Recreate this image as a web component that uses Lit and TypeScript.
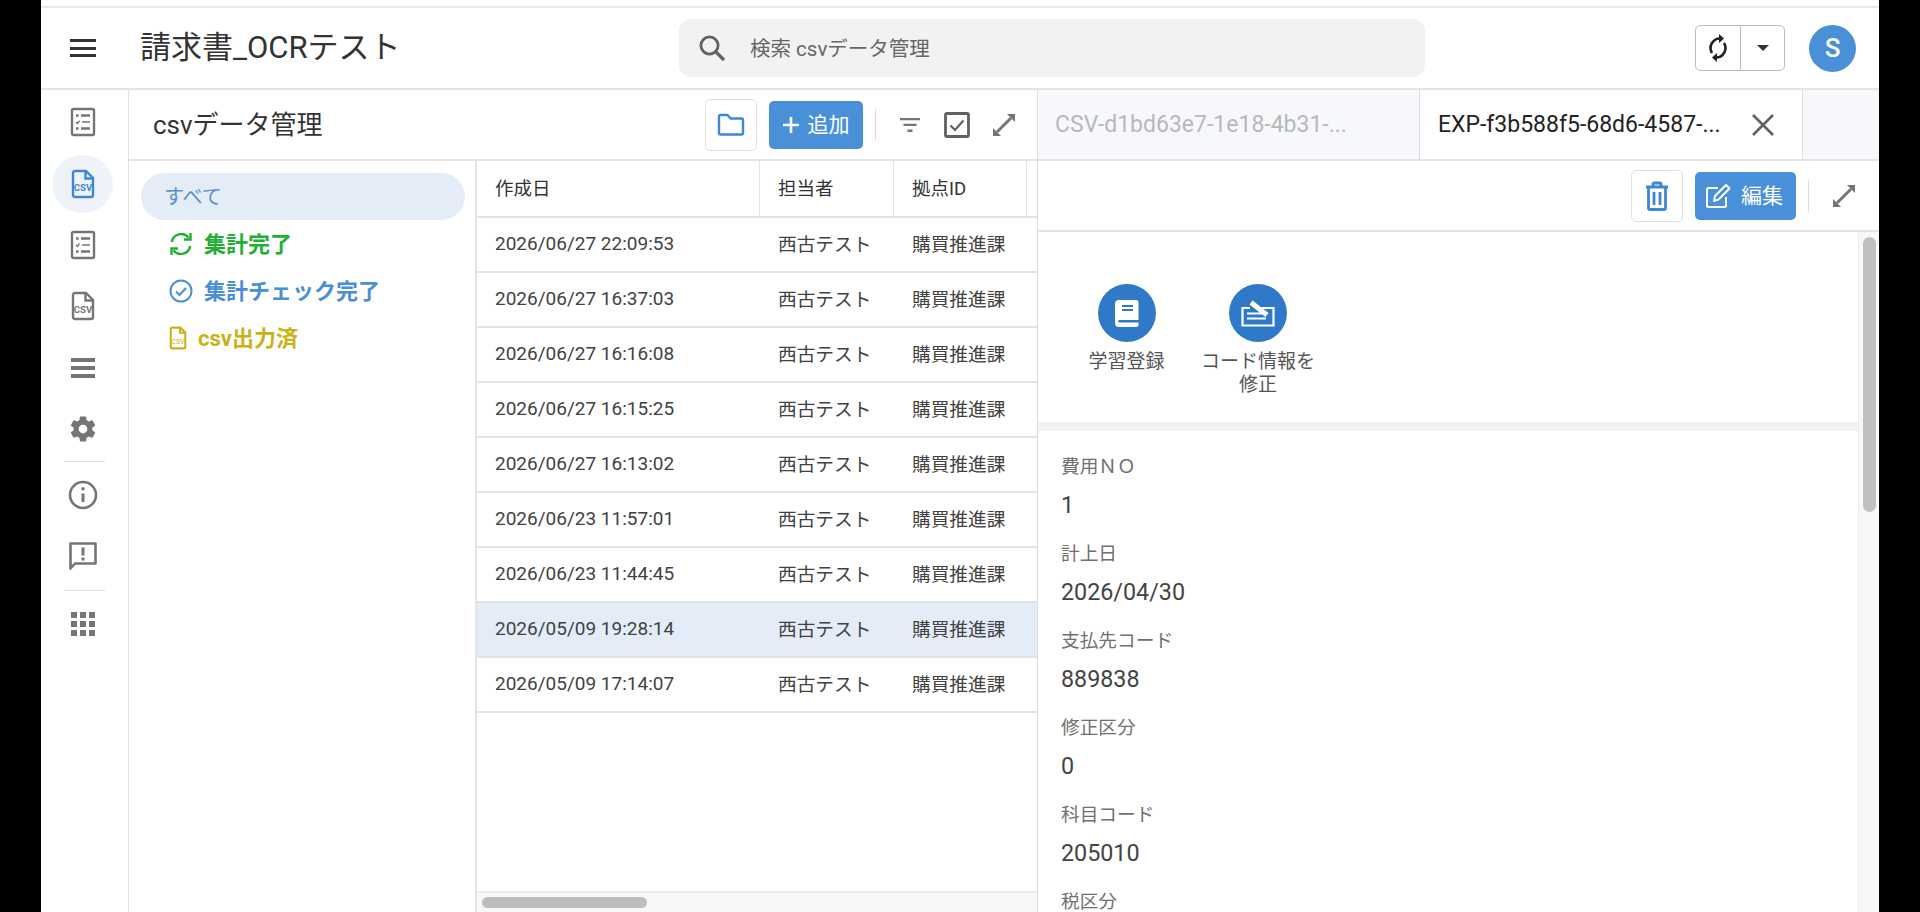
import { LitElement, html, css, svg } from 'lit';
import { customElement } from 'lit/decorators.js';

const rows = [
  ['2026/06/27 22:09:53', false],
  ['2026/06/27 16:37:03', false],
  ['2026/06/27 16:16:08', false],
  ['2026/06/27 16:15:25', false],
  ['2026/06/27 16:13:02', false],
  ['2026/06/23 11:57:01', false],
  ['2026/06/23 11:44:45', false],
  ['2026/05/09 19:28:14', true],
  ['2026/05/09 17:14:07', false],
] as const;

const fields = [
  ['費用ＮＯ', '1'],
  ['計上日', '2026/04/30'],
  ['支払先コード', '889838'],
  ['修正区分', '0'],
  ['科目コード', '205010'],
  ['税区分', ''],
];

const checklist = html`<svg class="i" width="26" height="30" viewBox="0 0 26 30" fill="none" stroke="#757575">
  <rect x="2" y="2" width="22" height="26" rx="1.5" stroke-width="2.4" />
  <path d="M6 8.500h2.600M6 21.500h2.600M11 8.500h9M11 21.500h9" stroke-width="2.600" />
  <path d="M6 15l1.400 1.400 2.200-2.800M12 15h8" stroke-width="1.500" />
</svg>`;

const csvFile = (c: string) => html`<svg class="i" width="26" height="30" viewBox="0 0 26 30" fill="none" stroke=${c}>
  <path d="M3 4a2 2 0 0 1 2-2h11l7 7v17a2 2 0 0 1-2 2H5a2 2 0 0 1-2-2z" stroke-width="2.400" />
  <path d="M15.500 2.500V9.500H23" stroke-width="2.400" />
  <text x="13" y="22" text-anchor="middle" font-size="9.500" font-weight="700" font-family="Roboto, sans-serif" fill=${c} stroke="none">CSV</text>
</svg>`;

const expand = (c: string) => svg`<svg width="24" height="24" viewBox="0 0 24 24" fill=${c}>
  <path d="M15 1h8v8zM1 15v8h8z" />
  <path d="M5 19L19 5" stroke=${c} stroke-width="3" />
</svg>`;

@customElement('app-root')
export class AppRoot extends LitElement {
  static styles = css`
    :host {
      display: block;
      height: 912px;
      overflow: hidden;
      background: #000;
      padding: 0 41px;
      font-family: Roboto, 'Noto Sans CJK JP', sans-serif;
      color: #333;
    }
    svg {
      display: block;
      flex: none;
    }
    .page {
      height: 912px;
      background: #fff;
      display: flex;
      flex-direction: column;
      padding-top: 6px;
      box-sizing: border-box;
    }
    .top {
      height: 84px;
      flex: none;
      border-top: 2px solid #e8e8e8;
      border-bottom: 2px solid #e4e4e4;
      box-sizing: border-box;
      display: flex;
      align-items: center;
    }
    .burger {
      margin-left: 29px;
      width: 26px;
      height: 18px;
      flex: none;
      border-top: 3px solid #333;
      border-bottom: 3px solid #333;
      box-sizing: border-box;
      position: relative;
    }
    .burger::after {
      content: '';
      position: absolute;
      left: 0;
      right: 0;
      top: 4.500px;
      height: 3px;
      background: #333;
    }
    .app-title {
      margin-left: 44px;
      width: 539px;
      font-size: 31px;
      line-height: 40px;
      color: #333;
      flex: none;
    }
    .search {
      width: 746px;
      height: 58px;
      flex: none;
      background: #f2f2f2;
      border-radius: 12px;
      display: flex;
      align-items: center;
      padding-left: 20px;
      box-sizing: border-box;
      font-size: 20.500px;
      color: #666;
      gap: 25px;
    }
    .search span {
      padding-bottom: 3px;
    }
    .sync {
      margin-left: 270px;
      width: 90px;
      height: 46px;
      flex: none;
      border: 1px solid #bdbdbd;
      border-radius: 5px;
      display: flex;
      box-sizing: border-box;
    }
    .sync > div {
      display: flex;
      align-items: center;
      justify-content: center;
    }
    .sync > div:first-child {
      width: 44px;
      border-right: 1px solid #bdbdbd;
    }
    .sync > div:last-child {
      flex: 1;
    }
    .caret {
      width: 0;
      height: 0;
      border-left: 6px solid transparent;
      border-right: 6px solid transparent;
      border-top: 6px solid #333;
    }
    .avatar {
      margin-left: 24px;
      width: 47px;
      height: 47px;
      border-radius: 50%;
      flex: none;
      background: #4a90d9;
      color: #fff;
      font-size: 26px;
      font-weight: 500;
      display: flex;
      align-items: center;
      justify-content: center;
    }
    .body {
      flex: 1;
      min-height: 0;
      display: flex;
    }
    .rail {
      width: 88px;
      flex: none;
      border-right: 1px solid #e0e0e0;
      box-sizing: border-box;
      display: flex;
      flex-direction: column;
      align-items: center;
      padding: 1px 4px 0 0;
    }
    .rail-item {
      width: 61px;
      height: 61.500px;
      flex: none;
      display: flex;
      align-items: center;
      justify-content: center;
      border-radius: 50%;
    }
    .rail-item.on {
      height: 58px;
      margin: 2px 0 1.500px;
      background: #eef3fa;
    }
    .rail-sep {
      width: 41px;
      height: 1px;
      flex: none;
      background: #dcdcdc;
      margin-left: 4px;
    }
    .rail-item.sm {
      margin-top: 2px;
    }
    .left {
      width: 909px;
      flex: none;
      display: flex;
      flex-direction: column;
      border-right: 1px solid #dedede;
      box-sizing: border-box;
    }
    .bar {
      height: 71px;
      flex: none;
      border-bottom: 2px solid #e4e4e4;
      box-sizing: border-box;
      display: flex;
      align-items: center;
    }
    .bar h2 {
      margin: 0 0 0 24px;
      font-size: 26px;
      line-height: 34px;
      font-weight: 400;
      color: #333;
      flex: 1;
    }
    .outline-btn {
      width: 52px;
      height: 52px;
      flex: none;
      border: 1px solid #e0e0e0;
      border-radius: 5px;
      box-sizing: border-box;
      display: flex;
      align-items: center;
      justify-content: center;
    }
    .solid-btn {
      height: 48px;
      flex: none;
      background: #4a90d9;
      color: #fff;
      border-radius: 5px;
      display: flex;
      align-items: center;
      justify-content: center;
      box-sizing: border-box;
      font-size: 21px;
    }
    .solid-btn span {
      padding-bottom: 4px;
    }
    .add {
      margin-left: 12px;
      width: 94px;
      gap: 9px;
    }
    .vsep {
      width: 1px;
      flex: none;
      background: #dcdcdc;
    }
    .tool {
      display: flex;
      align-items: center;
      justify-content: center;
      flex: none;
    }
    .split {
      flex: 1;
      min-height: 0;
      display: flex;
    }
    .filters {
      width: 348px;
      flex: none;
      border-right: 2px solid #e4e4e4;
      box-sizing: border-box;
      padding: 12px 10px 0 12px;
    }
    .filter {
      height: 47px;
      display: flex;
      align-items: center;
      font-size: 22px;
      font-weight: 700;
      padding-left: 28px;
    }
    .filter span {
      padding-bottom: 3px;
    }
    .filter.all {
      background: #e4ecf7;
      border-radius: 24px;
      color: #5a8fd0;
      font-weight: 400;
      font-size: 20px;
      padding-left: 23px;
    }
    .filter.green {
      color: #22b033;
      gap: 11px;
    }
    .filter.blue {
      color: #4a8fd6;
      gap: 11px;
    }
    .filter.yellow {
      color: #c9b21a;
      gap: 11px;
    }
    .table {
      flex: 1;
      min-width: 0;
      display: flex;
      flex-direction: column;
      font-size: 19px;
      color: #424242;
    }
    .row {
      height: 55px;
      flex: none;
      box-sizing: border-box;
      border-bottom: 2px solid #e4e4e4;
      display: grid;
      grid-template-columns: 283px 134px 133px 1fr;
      align-items: center;
    }
    .row.head {
      height: 57px;
      align-items: stretch;
    }
    .row.head > div {
      border-right: 1px solid #e4e4e4;
      display: flex;
      align-items: center;
      color: #333;
      font-size: 18.500px;
      padding-bottom: 3px;
    }
    .row.head > div:last-child {
      border-right: 0;
    }
    .row > div {
      padding-left: 18px;
      padding-bottom: 2px;
      white-space: nowrap;
    }
    .row .cjk {
      font-size: 18.700px;
      padding-bottom: 4px;
    }
    .row.sel {
      background: #e4ecf7;
    }
    .tspace {
      flex: 1;
    }
    .hscroll {
      height: 21px;
      flex: none;
      background: #f8f8f8;
      border-top: 2px solid #ececec;
      box-sizing: border-box;
      padding: 4px 5px;
    }
    .hscroll div {
      width: 165px;
      height: 11px;
      border-radius: 6px;
      background: #bdbdbd;
    }
    .right {
      flex: 1;
      min-width: 0;
      display: flex;
      flex-direction: column;
    }
    .tabs {
      height: 71px;
      flex: none;
      display: flex;
      background: #f7f8fb;
      border-bottom: 2px solid #e4e4e4;
      box-sizing: border-box;
    }
    .tab {
      width: 382px;
      flex: none;
      box-sizing: border-box;
      display: flex;
      align-items: center;
      padding-left: 17px;
      font-size: 23px;
      color: #b8b8b8;
      white-space: nowrap;
      border-right: 1px solid #dedede;
    }
    .tab.on {
      width: 383px;
      padding-left: 18px;
      background: #fff;
      color: #222;
      gap: 31px;
    }
    .actions {
      height: 71px;
      flex: none;
      border-bottom: 2px solid #e4e4e4;
      box-sizing: border-box;
      display: flex;
      align-items: center;
      justify-content: flex-end;
    }
    .edit {
      margin-left: 12px;
      width: 101px;
      gap: 10px;
      padding-right: 3px;
    }
    .detail {
      flex: 1;
      min-height: 0;
      display: flex;
    }
    .detail-main {
      flex: 1;
      min-width: 0;
      overflow: hidden;
    }
    .quick {
      height: 199px;
      box-sizing: border-box;
      border-bottom: 9px solid #f2f2f2;
      padding: 52px 0 0 32px;
      display: flex;
      align-items: flex-start;
      gap: 12px;
    }
    .quick-item {
      width: 113px;
      display: flex;
      flex-direction: column;
      align-items: center;
      font-size: 19px;
      line-height: 22.500px;
      color: #555;
      text-align: center;
    }
    .quick-item span {
      margin-top: 9px;
    }
    .circle {
      width: 58px;
      height: 58px;
      border-radius: 50%;
      background: #2f79c8;
      display: flex;
      align-items: center;
      justify-content: center;
    }
    .fields {
      padding: 23px 0 0 23px;
    }
    .field {
      height: 87px;
    }
    .field .k {
      font-size: 18.700px;
      line-height: 26px;
      color: #707070;
    }
    .field .v {
      font-size: 23.300px;
      line-height: 30px;
      margin-top: 10px;
      color: #444;
    }
    .vscroll {
      width: 21px;
      flex: none;
      background: #f8f8f8;
      border-left: 1px solid #ececec;
      box-sizing: border-box;
      padding: 5px 3px 0 4px;
    }
    .vscroll div {
      height: 275px;
      border-radius: 7px;
      background: #c0c0c0;
    }
  `;

  render() {
    return html`<div class="page">
      <div class="top">
        <div class="burger"></div>
        <div class="app-title">請求書_OCRテスト</div>
        <div class="search">
          <svg width="26" height="26" viewBox="0 0 26 26" fill="none" stroke="#616161" stroke-width="2.800">
            <circle cx="10.500" cy="10.500" r="8.600" />
            <path d="M16.500 16.500L25 25" stroke-width="3.200" />
          </svg>
          <span>検索 csvデータ管理</span>
        </div>
        <div class="sync">
          <div>
            <svg width="22" height="30" viewBox="0 0 22 30" fill="#212121">
              <path d="M12 1v9l5-4.500z M10 29v-9l-5 4.500z" />
              <path d="M13 5.500A9.500 9.500 0 0 0 5 20M9 24.500A9.500 9.500 0 0 0 17 10" fill="none" stroke="#212121" stroke-width="2.600" />
            </svg>
          </div>
          <div><span class="caret"></span></div>
        </div>
        <div class="avatar">S</div>
      </div>
      <div class="body">
        <div class="rail">
          <div class="rail-item">${checklist}</div>
          <div class="rail-item on">${csvFile('#3f87d4')}</div>
          <div class="rail-item">${checklist}</div>
          <div class="rail-item">${csvFile('#757575')}</div>
          <div class="rail-item">
            <svg width="26" height="22" viewBox="0 0 26 22" fill="#757575"><path d="M1 1h24v4H1zM1 9h24v4H1zM1 17h24v4H1z" /></svg>
          </div>
          <div class="rail-item">
            <svg width="30" height="30" viewBox="0 0 24 24" fill="#757575"><path d="M19.430 12.980a7.800 7.800 0 0 0 .07-.98c0-.33-.03-.66-.07-.98l2.110-1.650a.5.5 0 0 0 .12-.64l-2-3.460a.5.5 0 0 0-.61-.22l-2.490 1a7.300 7.300 0 0 0-1.690-.98l-.38-2.650A.49.49 0 0 0 14 2h-4a.49.49 0 0 0-.49.42l-.38 2.650c-.61.25-1.170.59-1.690.98l-2.490-1a.49.49 0 0 0-.61.22l-2 3.460a.49.49 0 0 0 .12.640l2.110 1.650a7.900 7.900 0 0 0 0 1.960l-2.110 1.650a.5.5 0 0 0-.12.64l2 3.460c.12.22.39.3.61.22l2.490-1c.52.4 1.080.73 1.690.98l.38 2.650c.03.24.24.42.49.42h4c.25 0 .46-.18.49-.42l.38-2.650c.61-.25 1.170-.59 1.690-.98l2.490 1c.23.09.49 0 .61-.22l2-3.460a.5.5 0 0 0-.12-.64zM12 15.500a3.500 3.500 0 1 1 0-7 3.500 3.500 0 0 1 0 7z" /></svg>
          </div>
          <div class="rail-sep" style="margin-top:1px"></div>
          <div class="rail-item sm">
            <svg width="30" height="30" viewBox="0 0 30 30" fill="none" stroke="#757575" stroke-width="2.600"><circle cx="15" cy="15" r="13" /><path d="M15 13.500V22" stroke-width="3" /><circle cx="15" cy="8.800" r="1.700" fill="#757575" stroke="none" /></svg>
          </div>
          <div class="rail-item">
            <svg width="30" height="30" viewBox="0 0 30 30" fill="none" stroke="#757575" stroke-width="2.600"><path d="M2.500 2.500h25v20H7L2.500 27.500z" stroke-linejoin="round" /><path d="M15 6.500v8M15 16.500v3" stroke-width="3" /></svg>
          </div>
          <div class="rail-sep" style="margin-top:3px"></div>
          <div class="rail-item sm">
            <svg width="26" height="26" viewBox="0 0 26 26" fill="#757575"><path d="M1 1h6v6H1zM10 1h6v6h-6zM19 1h6v6h-6zM1 10h6v6H1zM10 10h6v6h-6zM19 10h6v6h-6zM1 19h6v6H1zM10 19h6v6h-6zM19 19h6v6h-6z" /></svg>
          </div>
        </div>
        <div class="left">
          <div class="bar">
            <h2>csvデータ管理</h2>
            <div class="outline-btn">
              <svg width="28" height="24" viewBox="0 0 28 24" fill="none" stroke="#3f87d4" stroke-width="2.400"><path d="M2 3.500a1.500 1.500 0 0 1 1.500-1.500h7l3 3.500h11a1.500 1.500 0 0 1 1.500 1.500v13a1.500 1.500 0 0 1-1.500 1.500h-21A1.500 1.500 0 0 1 2 20.500z" stroke-linejoin="round" /></svg>
            </div>
            <div class="solid-btn add">
              <svg width="16" height="16" viewBox="0 0 16 16" fill="none" stroke="#fff" stroke-width="2.600"><path d="M8 0v16M0 8h16" /></svg>
              <span>追加</span>
            </div>
            <div class="vsep" style="height:31px;margin:0 0 0 12px"></div>
            <div class="tool" style="width:68px">
              <svg width="20" height="14" viewBox="0 0 20 14" fill="#757575"><path d="M0 0h20v2.200H0zM3.500 5.800h13V8h-13zM7.500 11.500h5V14h-5z" /></svg>
            </div>
            <div class="tool" style="width:26px">
              <svg width="26" height="26" viewBox="0 0 26 26" fill="none" stroke="#616161"><rect x="1.500" y="1.500" width="23" height="23" rx="1.500" stroke-width="2.800" /><path d="M6.500 13.500l4.500 4.500 8.500-9.500" stroke-width="2.200" /></svg>
            </div>
            <div class="tool" style="width:67px">${expand('#757575')}</div>
          </div>
          <div class="split">
            <div class="filters">
              <div class="filter all"><span>すべて</span></div>
              <div class="filter green">
                <svg width="24" height="24" viewBox="0 0 24 24" fill="none" stroke="#22b033" stroke-width="2.400"><path d="M2.800 10A9.500 9.500 0 0 1 19.500 5.500M21.200 14A9.500 9.500 0 0 1 4.500 18.500" /><path d="M21.500 1v6.500H15M2.500 23v-6.500H9" /></svg>
                <span>集計完了</span>
              </div>
              <div class="filter blue">
                <svg width="24" height="24" viewBox="0 0 24 24" fill="none" stroke="#4a8fd6" stroke-width="2"><circle cx="12" cy="12" r="10.500" /><path d="M7 12.500l3.500 3.500 6.500-7" /></svg>
                <span>集計チェック完了</span>
              </div>
              <div class="filter yellow">
                <svg width="18" height="24" viewBox="0 0 26 34" fill="none" stroke="#c9b21a"><path d="M2.500 4a2 2 0 0 1 2-2h12l7 7v21a2 2 0 0 1-2 2h-17a2 2 0 0 1-2-2z" stroke-width="3" /><path d="M16 2.500V9.500H23" stroke-width="3" /><text x="13" y="25" text-anchor="middle" font-size="10" font-weight="400" font-family="Roboto, sans-serif" fill="#c9b21a" stroke="none">CSV</text></svg>
                <span>csv出力済</span>
              </div>
            </div>
            <div class="table">
              <div class="row head">
                <div>作成日</div>
                <div>担当者</div>
                <div>拠点ID</div>
                <div></div>
              </div>
              ${rows.map(
                ([d, sel]) => html`<div class="row ${sel ? 'sel' : ''}">
                  <div>${d}</div>
                  <div class="cjk">西古テスト</div>
                  <div class="cjk">購買推進課</div>
                </div>`,
              )}
              <div class="tspace"></div>
              <div class="hscroll"><div></div></div>
            </div>
          </div>
        </div>
        <div class="right">
          <div class="tabs">
            <div class="tab">CSV-d1bd63e7-1e18-4b31-...</div>
            <div class="tab on">
              <span>EXP-f3b588f5-68d6-4587-...</span>
              <svg width="22" height="22" viewBox="0 0 22 22" fill="none" stroke="#616161" stroke-width="2.600"><path d="M1 1l20 20M21 1L1 21" /></svg>
            </div>
          </div>
          <div class="actions">
            <div class="outline-btn">
              <svg width="24" height="30" viewBox="0 0 24 30" fill="none" stroke="#3f87d4" stroke-width="2.800"><path d="M1 6h22M8 6V3a1 1 0 0 1 1-1h6a1 1 0 0 1 1 1v3M3.500 6v21a1.500 1.500 0 0 0 1.500 1.500h14a1.500 1.500 0 0 0 1.500-1.500V6M9 11v13M15 11v13" /></svg>
            </div>
            <div class="solid-btn edit">
              <svg width="26" height="26" viewBox="0 0 26 26" fill="none" stroke="#fff" stroke-width="2"><path d="M21 14v8.500a1.500 1.500 0 0 1-1.500 1.500h-16A1.500 1.500 0 0 1 2 22.500v-16A1.500 1.500 0 0 1 3.500 5H13" /><path d="M10 13L21 2l3.500 3.500-11 11L9 18z" stroke-linejoin="round" /></svg>
              <span>編集</span>
            </div>
            <div class="vsep" style="height:32px;margin-left:12px"></div>
            <div class="tool" style="width:70px">${expand('#757575')}</div>
          </div>
          <div class="detail">
            <div class="detail-main">
              <div class="quick">
                <div class="quick-item">
                  <div class="circle">
                    <svg width="24" height="27" viewBox="0 0 24 27" fill="#fff"><path d="M4 0h17a2.500 2.500 0 0 1 2.500 2.500v22A2.500 2.500 0 0 1 21 27H4a4 4 0 0 1-4-4V4a4 4 0 0 1 4-4zM7 5v2h11V5zM7 9v2h11V9zM3.500 20v2.500h20V20z" fill-rule="evenodd" /></svg>
                  </div>
                  <span>学習登録</span>
                </div>
                <div class="quick-item" style="width:126px">
                  <div class="circle">
                    <svg width="34" height="27" viewBox="0 0 34 27" fill="none" stroke="#fff"><path d="M9 8H1.500v17.500h31V8H21" stroke-width="2.200" /><path d="M10 2.500L26 15" stroke-width="5" /><path d="M6 13.500h15M6 18.500h19" stroke-width="2.200" /></svg>
                  </div>
                  <span>コード情報を<br />修正</span>
                </div>
              </div>
              <div class="fields">
                ${fields.map(
                  ([k, v]) => html`<div class="field">
                    <div class="k">${k}</div>
                    <div class="v">${v}</div>
                  </div>`,
                )}
              </div>
            </div>
            <div class="vscroll"><div></div></div>
          </div>
        </div>
      </div>
    </div>`;
  }
}
